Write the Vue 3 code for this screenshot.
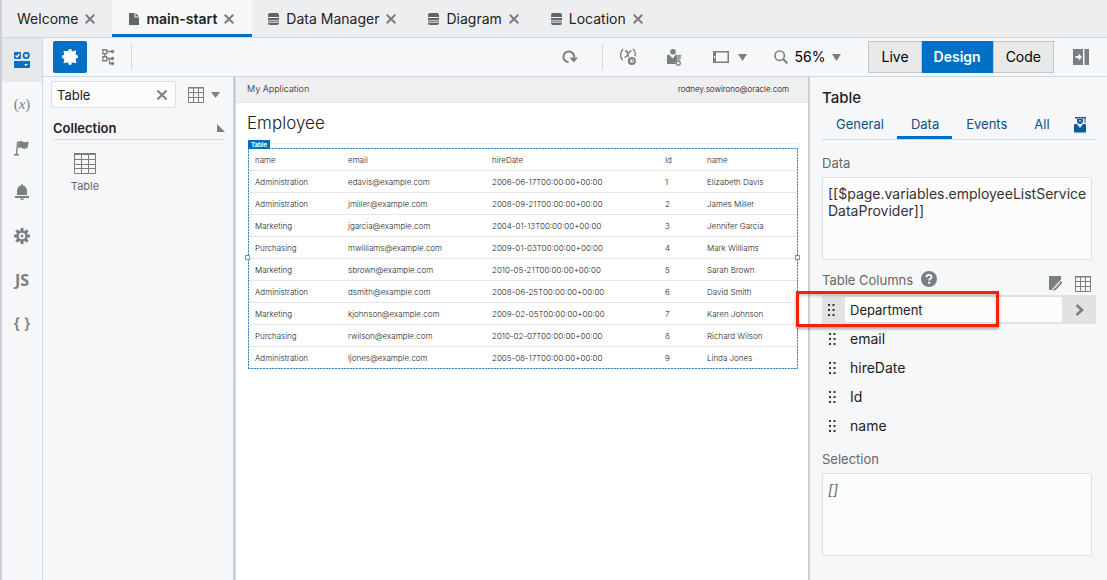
<script setup>
import { ref } from 'vue'

const search = ref('Table')
const dataExpr = ref('[[$page.variables.employeeListService\nDataProvider]]')
const selection = ref('')
const firstColumn = ref('Department')
const otherColumns = ['email', 'hireDate', 'Id', 'name']

const docs = [
  { name: 'Welcome', icon: '' },
  { name: 'main-start', icon: 'file', active: true },
  { name: 'Data Manager', icon: 'db' },
  { name: 'Diagram', icon: 'db' },
  { name: 'Location', icon: 'db' },
]
const heads = ['name', 'email', 'hireDate', 'Id', 'name']
const rows = [
  ['Administration', 'edavis@example.com', '2006-06-17T00:00:00+00:00', '1', 'Elizabeth Davis'],
  ['Administration', 'jmiller@example.com', '2008-09-21T00:00:00+00:00', '2', 'James Miller'],
  ['Marketing', 'jgarcia@example.com', '2004-01-13T00:00:00+00:00', '3', 'Jennifer Garcia'],
  ['Purchasing', 'mwilliams@example.com', '2009-01-03T00:00:00+00:00', '4', 'Mark Williams'],
  ['Marketing', 'sbrown@example.com', '2010-05-21T00:00:00+00:00', '5', 'Sarah Brown'],
  ['Administration', 'dsmith@example.com', '2008-06-25T00:00:00+00:00', '6', 'David Smith'],
  ['Marketing', 'kjohnson@example.com', '2009-02-05T00:00:00+00:00', '7', 'Karen Johnson'],
  ['Purchasing', 'rwilson@example.com', '2010-02-07T00:00:00+00:00', '8', 'Richard Wilson'],
  ['Administration', 'ljones@example.com', '2005-08-17T00:00:00+00:00', '9', 'Linda Jones'],
]
const teeth = [0, 45, 90, 135, 180, 225, 270, 315]
</script>

<template>
  <div class="studio">
    <nav class="docs" aria-label="Open documents">
      <div v-for="d in docs" :key="d.name" class="doc" :class="{ active: d.active }">
        <svg v-if="d.icon === 'file'" class="doc-icon" width="10" height="12" viewBox="0 0 10 12"><path d="M0 0h5.500v4.500H10V12H0z" /><path d="M6.500 0L10 3.500H6.500z" /></svg>
        <svg v-if="d.icon === 'db'" class="doc-icon" width="11" height="12" viewBox="0 0 11 12">
          <path d="M0 2Q0 0 2 0h7q2 0 2 2v2H0zM0 5h11v2H0zM0 10h11q0 2-2 2H2q-2 0-2-2z" /><path d="M0 7.500h11v2H0z" opacity=".7" />
        </svg>
        <button class="doc-name">{{ d.name }}</button>
        <button class="close" :aria-label="'Close ' + d.name">
          <svg width="10" height="10" viewBox="0 0 10 10"><path d="M.7.7l8.600 8.600M9.300.7L.7 9.300" fill="none" stroke="#7b7f82" stroke-width="2" /></svg>
        </button>
      </div>
    </nav>

    <div class="body">
      <nav class="rail" aria-label="Navigator">
        <button class="rail-btn on" aria-label="Components">
          <svg class="blue" width="16" height="16" viewBox="0 0 16 16">
            <path d="M0 1q0-1 1-1h5q1 0 1 1v5q0 1-1 1H1Q0 7 0 6z" /><path d="M1.500 3.500L3 5l2.500-3" fill="none" stroke="#fff" stroke-width="1.300" />
            <circle cx="12.200" cy="3.500" r="2.700" fill="none" stroke="#0070c8" stroke-width="1.800" />
            <path d="M0 9h16v6q0 1-1 1H1q-1 0-1-1z" /><path class="white" d="M10 12h4l-2 2z" />
          </svg>
        </button>
        <button class="rail-btn varx" aria-label="Variables">(<i>x</i>)</button>
        <button class="rail-btn" aria-label="Actions">
          <svg width="16" height="16" viewBox="0 0 16 16"><path d="M3 1.500h1.300L3.200 14H5v1.500H0V14h1.800z" /><path d="M4.500 1.500Q7 .5 9 1.800 11 2.800 14.700 1.400L13.500 8Q10.500 9.300 8.500 8.200 6.500 7 4 8z" /></svg>
        </button>
        <button class="rail-btn" aria-label="Events">
          <svg width="14" height="16" viewBox="0 0 14 16"><path d="M6 1.500Q6 0 7 0t1 1.500Q12 2.500 12 7v4H2V7Q2 2.500 6 1.500zM0 12h14v2H0zM5 14.500h4Q8.500 16 7 16t-2-1.500z" /></svg>
        </button>
        <button class="rail-btn" aria-label="Settings">
          <svg width="16" height="16" viewBox="0 0 16 16"><rect v-for="t in teeth" :key="t" x="6.500" y="0" width="3" height="4" :transform="`rotate(${t} 8 8)`" /><circle cx="8" cy="8" r="4.500" fill="none" stroke="#7b7f82" stroke-width="2.500" /><circle cx="8" cy="8" r="1.400" /></svg>
        </button>
        <button class="rail-btn js">JS</button>
        <button class="rail-btn json" aria-label="JSON">{ }</button>
      </nav>

      <div class="work">
        <div class="toolbar">
          <button class="puzzle" aria-label="Components palette">
            <svg class="white" width="16" height="16" viewBox="0 0 16 16"><path d="M1.500 2H5.500Q6.800 2.800 6.300 1.500 6 0 8 0t1.800 1.500Q9.300 2.800 10.500 2.200L14.200 1.500 13.800 5Q13.500 6.300 14.500 6 16 5.700 16 7.700T14.500 9.500Q13.300 9.200 13.700 10.300L14.500 14.300 10.500 13.500Q9.300 13 9.800 14.200 10 16 8 16T6.200 14.200Q6.700 13 5.500 13.500L1.500 14.300 2.200 10.500Q2.500 9.200 1.500 9.500 0 10 0 7.800T1.500 6Q2.700 6.300 2.200 5z" /></svg>
          </button>
          <button class="plain tree" aria-label="Structure">
            <svg width="13" height="17" viewBox="0 0 13 17"><path d="M.75.75h4v4h-4zM.75 7.750h4v4h-4zM2.750 5v3M5 2.500h6M5 9.500h5M7.500 9.500v5h3" fill="none" stroke="#7b7f82" stroke-width="1.300" /><circle cx="10.500" cy="2.500" r="1.700" /><circle cx="10.500" cy="9.500" r="1.700" /><circle cx="10.500" cy="14.500" r="1.700" /></svg>
          </button>
          <span class="sep"></span>
          <div class="tools">
            <button class="plain" aria-label="Reload">
              <svg width="16" height="14" viewBox="0 0 16 14"><path d="M6.500 12.300A5.400 5.400 0 1 1 12.200 7.500" fill="none" stroke="#7b7f82" stroke-width="2" /><path d="M7.500 7.500h8.500l-4.200 5z" /></svg>
            </button>
            <span class="sep"></span>
            <button class="plain find" aria-label="Variables">
              <svg width="18" height="18" viewBox="0 0 18 18"><path d="M4 1Q-.5 6 3.500 12.500M14 1q3 3 2 7M6 3.500Q8 2 8.500 5L9.500 9M12.500 3Q11 2.500 9 6T5.500 9.500" fill="none" stroke="#7b7f82" stroke-width="1.400" /><circle cx="12.800" cy="13" r="4" /><circle class="bg" cx="13" cy="12.800" r="2" /><path d="M12 11.500h2.500l-1 2.500z" /></svg>
            </button>
            <button class="plain role" aria-label="Security">
              <svg width="15" height="17" viewBox="0 0 15 17"><circle cx="6" cy="2.800" r="2.800" /><path d="M0 7q0-1.500 2-1.500L5.500 9.500l3.500-4 1.500.5v5.500L8.500 13v2H0z" /><circle class="bg" cx="11.300" cy="14.200" r="2" stroke="#7b7f82" stroke-width="1.300" /><path d="M11.800 12V6M11.800 6.800H14.500M11.800 9.200H14" fill="none" stroke="#7b7f82" stroke-width="1.200" /></svg>
            </button>
            <button class="plain frame" aria-label="Screen size">
              <svg width="16" height="12" viewBox="0 0 16 12"><path d="M.75.75h14.500v10.500H.75z" fill="none" stroke="#7b7f82" stroke-width="1.500" /><path d="M1 1h2v10H1z" /><path class="white" d="M1 5h1.200v2H1z" /></svg>
              <svg width="9" height="7" viewBox="0 0 9 7"><path d="M0 0h9L4.500 7z" /></svg>
            </button>
            <button class="plain zoom" aria-label="Zoom 56%">
              <svg width="14" height="14" viewBox="0 0 14 14"><circle cx="5.700" cy="5.700" r="4.700" fill="none" stroke="#7b7f82" stroke-width="1.600" /><path d="M9 9l4.300 4.300" stroke="#7b7f82" stroke-width="2" /></svg>
              <span>56%</span>
              <svg width="9" height="7" viewBox="0 0 9 7"><path d="M0 0h9L4.500 7z" /></svg>
            </button>
            <div class="modes">
              <button>Live</button><button class="on">Design</button><button>Code</button>
            </div>
            <button class="plain" aria-label="Collapse inspector">
              <svg width="16" height="16" viewBox="0 0 16 16"><path d="M0 0h10v16H0zM11.500 0H16v16h-4.500z" /><path class="white" d="M2.500 7h3V4.500L9 8l-3.500 3.500V9h-3z" /></svg>
            </button>
          </div>
        </div>

        <div class="panes">
          <aside class="palette">
            <div class="search-row">
              <div class="search">
                <input v-model="search" type="text" aria-label="Filter components" />
                <button class="close" aria-label="Clear filter" @click="search = ''">
                  <svg width="10" height="10" viewBox="0 0 10 10"><path d="M.5.5l9 9M9.500.5l-9 9" fill="none" stroke="#7b7f82" stroke-width="2" /></svg>
                </button>
              </div>
              <button class="plain view" aria-label="Palette view">
                <svg width="16" height="16" viewBox="0 0 16 16"><path d="M.5.5h15v15H.5zM.5 5.500h15M.5 10.500h15M5.500 1v14.500M10.500 1v14.500" fill="none" stroke="#7b7f82" /><path d="M0 0h16v1.500H0z" /></svg>
                <svg width="9" height="6" viewBox="0 0 9 6"><path d="M0 0h9L4.500 6z" /></svg>
              </button>
            </div>
            <h2>Collection <svg width="8" height="8" viewBox="0 0 8 8"><path d="M0 0l8 8H0z" /></svg></h2>
            <button class="component">
              <svg width="22" height="21" viewBox="0 0 22 21"><path d="M.5.5h21v20H.5zM1 6.500h20M1 11.500h20M1 15.500h20M7.500 1v19M14.500 1v19" fill="none" stroke="#7b7f82" /><path d="M0 0h22v2H0z" /></svg>
              <span>Table</span>
            </button>
          </aside>

          <main class="canvas">
            <header class="app-bar"><span class="app-name">My Application</span><span class="user">rodney.sowirono@oracle.com</span></header>
            <div class="page">
              <h1>Employee</h1>
              <div class="selected">
                <span class="tag">Table</span>
                <i class="knob left"></i><i class="knob right"></i>
                <table>
                  <colgroup><col class="c1" /><col class="c2" /><col class="c3" /><col class="c4" /><col /></colgroup>
                  <thead><tr><th v-for="(h, i) in heads" :key="i" scope="col">{{ h }}</th></tr></thead>
                  <tbody><tr v-for="r in rows" :key="r[3]"><td v-for="(c, i) in r" :key="i">{{ c }}</td></tr></tbody>
                </table>
              </div>
            </div>
          </main>

          <aside class="inspector">
            <h2>Table</h2>
            <div class="tabs" role="tablist">
              <button role="tab">General</button><button role="tab" class="on" aria-selected="true">Data</button><button role="tab">Events</button><button role="tab">All</button>
              <button class="guide" aria-label="Quick start">
                <svg class="navy" width="12" height="16" viewBox="0 0 12 16"><path d="M1 0h11v1.500H1zM3 2h6v2.500Q8.500 7 6 7T3 4.500zM10.500 1.500h1V6h-1z" /><path d="M0 8q0-1 1-1h2l3 4 3-4h2q1 0 1 1v7.500H0z" /><path class="bg" d="M4.500 3.500h3L6 5z" /></svg>
              </button>
            </div>
            <label class="field-label" for="data-field">Data</label>
            <textarea id="data-field" v-model="dataExpr" spellcheck="false"></textarea>
            <div class="columns-head">
              <span>Table Columns</span>
              <button class="plain" aria-label="Help">
                <svg width="16" height="16" viewBox="0 0 16 16"><circle cx="8" cy="8" r="8" /><path d="M5.500 6.200Q5.500 3.800 8 3.800t2.500 2.100Q10.500 7 9.200 7.700 8.200 8.200 8.200 9.500" fill="none" stroke="#fff" stroke-width="1.800" /><path class="white" d="M7.200 10.800h2v2h-2z" /></svg>
              </button>
              <button class="plain edit" aria-label="Edit columns">
                <svg width="15" height="16" viewBox="0 0 15 16"><path d="M0 0h12v4L3 14H0z" /><path d="M3.500 15.500l1-3.500 7-7.500 2.500 2.300-7 7.500z" stroke="#f6f7f9" stroke-width="1" /><path d="M5.500 12.500l5.500-6" stroke="#f6f7f9" /></svg>
              </button>
              <button class="plain" aria-label="Add columns">
                <svg width="16" height="16" viewBox="0 0 16 16"><path d="M.5.5h15v15H.5zM.5 5.500h15M.5 10.500h15M5.500 1v14.500M10.500 1v14.500" fill="none" stroke="#7b7f82" /><path d="M0 0h16v1.500H0z" /></svg>
              </button>
            </div>
            <div class="column current">
              <svg class="grip" width="7" height="12" viewBox="0 0 7 12"><path d="M0 0h2v2H0zM4.500 0h2v2h-2zM0 5h2v2H0zM4.500 5h2v2h-2zM0 10h2v2H0zM4.500 10h2v2h-2z" /></svg>
              <input v-model="firstColumn" type="text" aria-label="Column name" />
              <button class="plain go" aria-label="Open column">
                <svg width="10" height="12" viewBox="0 0 10 12"><path d="M2.500 1L8 6l-5.500 5" fill="none" stroke="#7b7f82" stroke-width="2.600" /></svg>
              </button>
              <span class="callout"></span>
            </div>
            <div v-for="c in otherColumns" :key="c" class="column">
              <svg class="grip" width="7" height="12" viewBox="0 0 7 12"><path d="M0 0h2v2H0zM4.500 0h2v2h-2zM0 5h2v2H0zM4.500 5h2v2h-2zM0 10h2v2H0zM4.500 10h2v2h-2z" /></svg>
              <span class="column-name">{{ c }}</span>
            </div>
            <label class="field-label selection" for="selection-field">Selection</label>
            <textarea id="selection-field" v-model="selection" placeholder="[]"></textarea>
          </aside>
        </div>
      </div>
    </div>
  </div>
</template>

<style>
body { margin: 0; }
</style>

<style scoped>
* { box-sizing: border-box; }
.studio { display: flex; flex-direction: column; min-height: 100vh; border-left: 2px solid #cccdd6; background: #f6f7f9; font: 14px/18px Inter, "Liberation Sans", sans-serif; color: #222; }
button { font: inherit; color: inherit; background: none; border: 0; padding: 0; margin: 0; cursor: pointer; }
input, textarea { font: inherit; color: inherit; }
svg { display: block; flex: none; fill: #7b7f82; }
.blue { fill: #0070c8; }
.white { fill: #fff; }
.bg { fill: #f6f7f9; }
.navy { fill: #0b5c9e; }
h1, h2 { margin: 0; }
.docs { display: flex; height: 38px; background: #edeef0; border-bottom: 1px solid #cbd8e3; }
.doc { display: flex; align-items: center; gap: 7px; padding: 0 16px; height: 37px; }
.doc:first-child { padding: 0 17px 0 15px; }
.doc.active { background: #f6f7f9; border-bottom: 3px solid #0070c4; padding: 3px 18px 0 17px; font-weight: 600; }
.doc-icon { fill: #636669; }
.doc-name { white-space: nowrap; }
.body { display: flex; flex: 1; }
.rail { width: 41px; border-right: 1px solid #cbd8e3; display: flex; flex-direction: column; flex: none; }
.rail-btn { height: 44px; display: flex; align-items: center; justify-content: center; color: #7b7f82; }
.rail-btn.on { background: #e7e8ea; }
.varx { font-family: "Liberation Serif", serif; font-size: 15px; }
.js { font-family: "Open Sans", sans-serif; font-weight: 700; font-size: 16px; }
.json { font-weight: 600; font-size: 15px; }
.work { flex: 1; min-width: 0; display: flex; flex-direction: column; }
.toolbar { height: 39px; border-bottom: 1px solid #cbd8e3; display: flex; align-items: center; padding: 0 18px 0 10px; }
.puzzle { width: 34px; height: 32px; background: #0070c4; border-radius: 2px; display: flex; align-items: center; justify-content: center; }
.plain { display: flex; align-items: center; }
.tree { margin: 0 16px 0 15px; }
.sep { width: 1px; height: 26px; background: #d5d8db; }
.tools { margin-left: auto; display: flex; align-items: center; }
.tools .sep { margin: 0 16px 0 24px; }
.role { margin-left: 30px; }
.frame { margin-left: 31px; gap: 9px; }
.zoom { margin-left: 27px; gap: 7px; color: #000; }
.modes { display: flex; margin: 0 19px 0 27px; height: 32px; }
.modes button { border: 1px solid #c4c7ca; background: #e9e9ea; color: #000; padding: 0 12px; }
.modes button.on { background: #0070c4; border-color: #0070c4; color: #fff; font-weight: 600; padding: 0 11px; }
.panes { flex: 1; display: flex; }
.palette { width: 192px; flex: none; border-right: 2px solid #cccdd6; padding: 4px 8px 0; }
.search-row { display: flex; align-items: center; }
.search { display: flex; align-items: center; width: 125px; height: 27px; background: #fcfcfd; border: 1px solid #dcdfe2; border-radius: 2px; padding-right: 8px; }
.search input { flex: 1; min-width: 0; border: 0; background: none; padding: 0 0 0 5px; font-size: 13px; outline: 0; }
.view { margin-left: 12px; gap: 7px; }
.palette h2 { display: flex; align-items: center; justify-content: space-between; font-size: 13px; line-height: 20px; font-weight: 600; margin: 10px 0 0 2px; padding-bottom: 1px; border-bottom: 1px solid #d5d8db; }
.component { display: flex; flex-direction: column; align-items: center; width: 68px; margin-top: 13px; font-size: 11px; color: #666; gap: 3px; }
.canvas { flex: 1; min-width: 0; background: #fff; border-left: 1px solid #cbd8e3; font-size: 8px; line-height: 10px; color: #222; font-weight: 300; }
.app-bar { height: 26px; background: #efefef; border-bottom: 1px solid #e6e6e6; display: flex; justify-content: space-between; padding: 7px 19px 0 11px; }
.user { color: #000; }
.app-name { font-size: 9px; }
.page { padding: 8px 10px 0 11px; }
h1 { font-size: 17px; line-height: 24px; font-weight: 300; color: #222; padding-bottom: 8px; border-bottom: 1px solid #eee; }
.selected { position: relative; margin: 4px 0 0 1px; padding: 1px;
  background:
    repeating-linear-gradient(90deg, #3f86cc 0 2px, #c4dcf2 2px 3px) top / 100% 1px no-repeat,
    repeating-linear-gradient(90deg, #3f86cc 0 2px, #c4dcf2 2px 3px) bottom / 100% 1px no-repeat,
    repeating-linear-gradient(#3f86cc 0 2px, #c4dcf2 2px 3px) left / 1px 100% no-repeat,
    repeating-linear-gradient(#3f86cc 0 2px, #c4dcf2 2px 3px) right / 1px 100% no-repeat; }
.tag { position: absolute; left: 0; top: -8px; background: #0070c4; color: #fff; font-size: 6px; line-height: 9px; font-weight: 700; padding: 0 3px; }
.knob { position: absolute; top: 107px; width: 5px; height: 5px; border: 1px solid #5b9bd8; background: #fff; }
.knob.left { left: -3px; }
.knob.right { right: -2px; }
table { width: 100%; table-layout: fixed; border-collapse: separate; border-spacing: 0; }
.c1 { width: 93px; }
.c2 { width: 144px; }
.c3 { width: 173px; }
.c4 { width: 42px; }
th, td { height: 22px; padding: 0 0 0 6px; text-align: left; font-weight: 300; border-bottom: 1px solid #e6e6e6; white-space: nowrap; }
tbody tr:last-child td { height: 21px; border-bottom: 0; }
.inspector { width: 299px; flex: none; border-left: 2px solid #cccdd6; padding: 9px 11px 20px 12px; display: flex; flex-direction: column; }
.inspector h2 { font-size: 15px; line-height: 24px; font-weight: 500; }
.tabs { display: flex; height: 30px; border-bottom: 1px solid #cbd8e3; font-size: 13px; color: #0b5286; }
.tabs button { padding: 1px 13px 0 14px; border-bottom: 3px solid transparent; }
.tabs button.on { border-bottom-color: #0070c4; }
.tabs .guide { margin-left: auto; padding: 0 10px 3px 0; display: flex; align-items: center; align-self: flex-end; }
.field-label { font-size: 13px; color: #666; margin: 14px 0 5px; }
textarea { margin-right: 4px; height: 83px; resize: none; background: #fcfcfd; border: 1px solid #dcdfe2; border-radius: 2px; padding: 7px 0 0 5px; line-height: 17px; color: #333; outline: 0; overflow: auto; }
textarea::placeholder { font-style: italic; color: #666; opacity: 1; }
.columns-head { display: flex; align-items: flex-end; margin-top: 10px; height: 25px; font-size: 13px; color: #666; gap: 8px; padding: 0 5px 3px 0; }
.columns-head span { margin-bottom: 3px; }
.columns-head span + .plain { margin-bottom: 5px; }
.columns-head .edit { margin: 0 3px 0 auto; }
.column { position: relative; display: flex; align-items: center; height: 29px; padding-left: 7px; }
.current { background: #e1e3e3; padding-left: 6px; }
.grip { fill: #333; }
.column-name { margin-left: 14px; }
.current input { flex: 1; min-width: 0; height: 25px; margin-left: 10px; padding: 0 5px; background: #fcfcfd; border: 0; outline: 0; font-size: 13px; }
.go { width: 34px; justify-content: center; }
.callout { position: absolute; left: -26px; top: -4px; width: 203px; height: 36px; border: 3px solid #f5210b; box-shadow: 0 2px 3px rgba(0, 0, 0, .35), inset 0 2px 3px rgba(0, 0, 0, .2); pointer-events: none; }
.selection { margin-top: 10px; }
</style>
